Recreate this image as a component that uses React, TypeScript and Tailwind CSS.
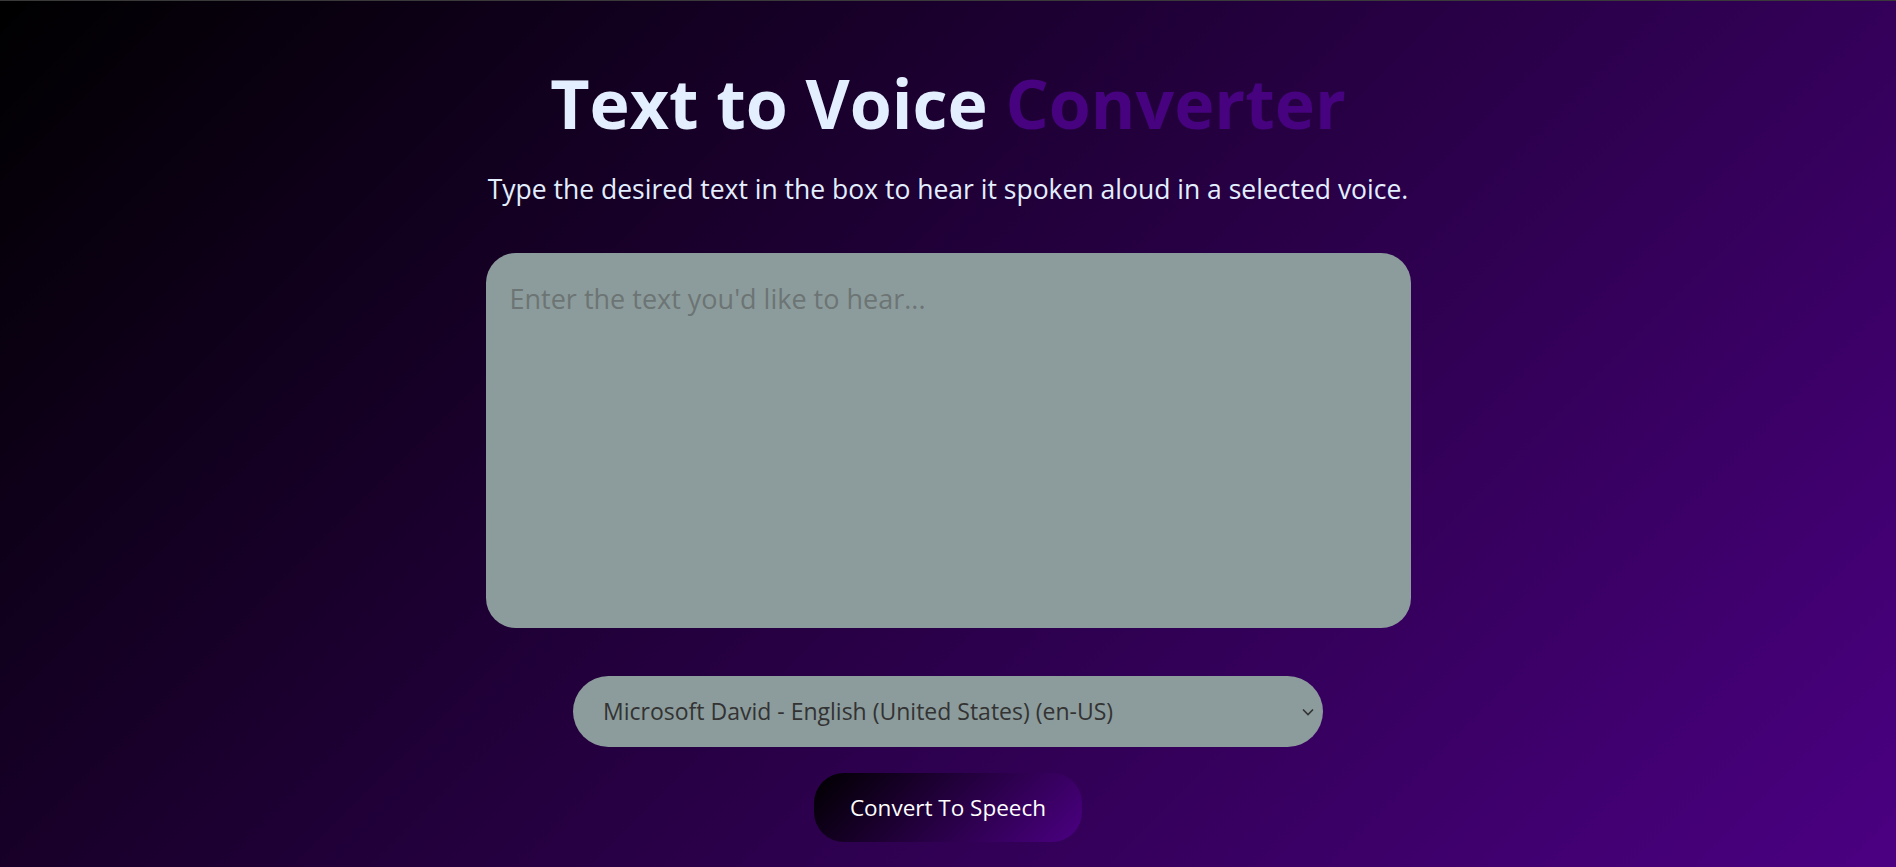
import { useState } from 'react';

const voices = [
  'Microsoft David - English (United States) (en-US)',
  'Microsoft Mark - English (United States) (en-US)',
  'Microsoft Zira - English (United States) (en-US)',
];

export default function App() {
  const [text, setText] = useState('');
  const [voice, setVoice] = useState(voices[0]);

  return (
    <div
      className="min-h-screen w-full border-t border-[#3a3a3a] bg-[linear-gradient(135deg,#000000,#4b0082)] flex flex-col items-center"
      style={{ fontFamily: '"Segoe UI", "Open Sans", "Noto Sans", sans-serif' }}
    >
      <h1 className="mt-[52px] text-[68px] font-bold leading-[100px] text-[#e3efff]">
        Text to Voice <span className="text-[#47037f]">Converter</span>
      </h1>
      <p className="mt-[18px] text-[26.5px] leading-[36px] text-[#e3efff]">
        Type the desired text in the box to hear it spoken aloud in a selected voice.
      </p>

      <textarea
        value={text}
        onChange={(e) => setText(e.target.value)}
        placeholder="Enter the text you'd like to hear..."
        className="mt-[46px] w-[925px] h-[375px] resize-none rounded-[30px] bg-[#8c9c9c] px-[24px] pt-[26px] pb-[18px] text-[27px] leading-[40px] text-[#222] placeholder:text-[#6d7474] outline-none"
      />

      <div className="relative mt-[48px]">
        <select
          value={voice}
          onChange={(e) => setVoice(e.target.value)}
          className="appearance-none w-[750px] h-[71px] rounded-full bg-[#8c9c9c] pl-[30px] pr-[40px] text-[23px] text-[#333] outline-none"
        >
          {voices.map((v) => (
            <option key={v} value={v}>
              {v}
            </option>
          ))}
        </select>
        <svg
          className="pointer-events-none absolute right-[9px] top-1/2 -translate-y-1/2"
          width="12"
          height="8"
          viewBox="0 0 12 8"
          fill="none"
        >
          <path d="M1 1.5 6 6.5 11 1.5" stroke="#333" strokeWidth="1.6" />
        </svg>
      </div>

      <button className="mt-[26px] w-[268px] h-[69px] rounded-[30px] bg-[linear-gradient(135deg,#000000,#4b0082)] text-[22.5px] text-white">
        Convert To Speech
      </button>
    </div>
  );
}
